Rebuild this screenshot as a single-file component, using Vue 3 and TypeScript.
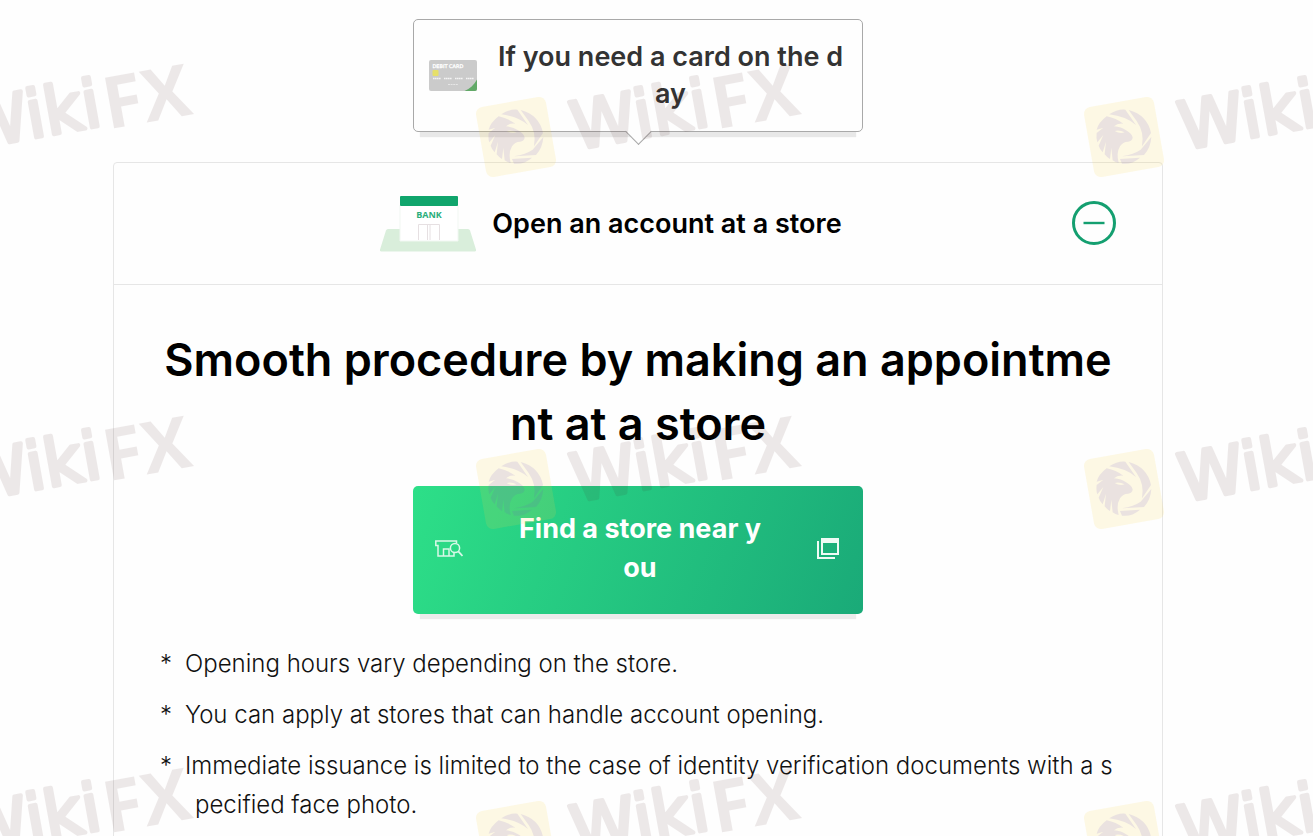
<script setup lang="ts">
import { ref } from 'vue'

const open = ref(true)

const marks: { x: number; y: number }[] = []
for (let row = 0; row < 3; row++) {
  for (let col = -1; col < 2; col++) {
    marks.push({ x: 516 + col * 608, y: 137 + row * 352 })
  }
}

const notes: string[][] = [
  ['Opening hours vary depending on the store.'],
  ['You can apply at stores that can handle account opening.'],
  ['Immediate issuance is limited to the case of identity verification documents with a s', 'pecified face photo.'],
]
</script>

<template>
  <main class="page">
    <div class="bubble">
      <svg class="card-icon" viewBox="0 0 48 31" aria-hidden="true">
        <rect width="48" height="31" rx="2" fill="#cbcbcb" />
        <path d="M48 19.500V29a2 2 0 0 1-2 2H35.500C41 28.500 45 25 48 19.500Z" fill="#62a968" />
        <rect x="3.500" y="10" width="6" height="6" rx="1" fill="#e6e06a" />
        <text x="3.500" y="7.500" class="card-name">DEBIT CARD</text>
        <path d="M4 18.500h8M15 18.500h8M26 18.500h8M37 18.500h8" stroke="#f4f4f4" stroke-width="1.600" stroke-dasharray="1.600 .4" />
        <path d="M19 24.500h10" stroke="#e6e6e6" stroke-width="1" stroke-dasharray="2 .6" />
      </svg>
      <p class="bubble-text">If you need a card on the d<br />ay</p>
    </div>

    <section class="panel">
      <header class="panel-head">
        <svg class="bank-icon" viewBox="0 0 96 56" aria-hidden="true">
          <path d="M8 33h80q1.500 0 2 1.500l6 19q.5 2-1.500 2H1.500q-2 0-1.500-2l6-19Q6.500 33 8 33Z" fill="#d9eedb" />
          <path d="M20 9h58v36H20Z" fill="#fff" stroke="#f1f7f2" stroke-width="1" />
          <rect x="20" y="0" width="58" height="10" rx="1" fill="#10a56c" />
          <path d="M38.500 44V28.500h21V44M47.500 28.500V44M50 28.500V44" fill="none" stroke="#e6e0e2" stroke-width="1" />
          <text x="49" y="22" text-anchor="middle" class="bank-name">BANK</text>
        </svg>
        <h2 class="panel-title">Open an account at a store</h2>
        <button class="toggle" type="button" aria-label="Toggle section" :aria-expanded="open" @click="open = !open">
          <svg viewBox="0 0 44 44" aria-hidden="true">
            <circle cx="22" cy="22" r="20.500" fill="none" stroke="#149f70" stroke-width="3" />
            <path d="M11.500 22h21" stroke="#149f70" stroke-width="2.400" />
            <path v-if="!open" d="M22 11.500v21" stroke="#149f70" stroke-width="2.400" />
          </svg>
        </button>
      </header>

      <div v-if="open" class="panel-body">
        <h1 class="headline">Smooth procedure by making an appointme<br />nt at a store</h1>

        <a class="find" href="#stores">
          <svg class="shop-icon" viewBox="0 0 28 17" fill="none" stroke="#d9f8e8" stroke-width="1.500" aria-hidden="true">
            <path d="M21.500 3V1H.8v4.500h2.200V16H19V13" />
            <path d="M8.500 16V9h5.500v7" />
            <circle cx="20" cy="8" r="4.600" />
            <path d="M23.300 11.300 27.500 16" stroke-width="1.800" />
          </svg>
          <span class="find-text">Find a store near y<br />ou</span>
          <svg class="window-icon" viewBox="0 0 22 21" fill="#effbf5" aria-hidden="true">
            <path d="M4 0h18v17H4ZM6 5v10h14V5Z" fill-rule="evenodd" />
            <path d="M0 3h2v16h16v2H0Z" />
          </svg>
        </a>

        <ul class="notes">
          <li v-for="note in notes" :key="note[0]">
            <span class="star">*</span>
            <span class="note">
              <template v-for="(line, i) in note" :key="line"><br v-if="i > 0" />{{ line }}</template>
            </span>
          </li>
        </ul>
      </div>
    </section>

    <svg class="marks" aria-hidden="true">
      <g v-for="m in marks" :key="`${m.x}-${m.y}`" :transform="`translate(${m.x} ${m.y})`">
        <rect x="-35.500" y="-35.500" width="71" height="71" rx="7" transform="rotate(-10)" class="mark-tile" />
        <g transform="scale(.3333)" class="mark-bird">
          <path d="M-52-62Q-76-44-82-22L-62-28-82-12Q-84 4-80 16L-62-6-76 26Q-72 38-64 46L-54 14-58 52Q-50 62-42 66L-38 32-34 70Q-26 76-16 78Q-24 48-12 28Q-4 14 12 14Q24 12 26 2Q24-10 6-20Q-8-30-30-32Q-20-42-2-40Q-24-56-52-62ZM-28-18Q-14-22 2-14Q-12-8-28-18Z" fill-rule="evenodd" />
          <path d="M-44-68Q-20-84 4-82L36-36Q6-62-44-68Z" />
          <path d="M14-81Q70-66 81-12L54 28Q62-14 38-48Z" />
          <path d="M82 0Q80 32 60 54L-6 58Q30 52 50 38Z" />
          <path d="M-12 66 48 62Q22 84-6 80Z" />
        </g>
        <g transform="rotate(-10.200)" class="mark-word">
          <text x="56" y="23" class="mark-soft">Wiki</text>
          <text x="198" y="28" class="mark-sharp">FX</text>
        </g>
      </g>
    </svg>
  </main>
</template>

<style>
body {
  margin: 0;
  background: #fefefe;
}
html,
body {
  overflow-x: hidden;
}
</style>

<style scoped>
.page {
  position: relative;
  box-sizing: border-box;
  height: 100vh;
  overflow: hidden;
  padding: 19px 150px 0 113px;
  font-family: Inter, 'Noto Sans', sans-serif;
  color: #000;
}

.bubble {
  position: relative;
  box-sizing: border-box;
  display: flex;
  align-items: center;
  gap: 17px;
  max-width: 450px;
  margin: 0 auto 30px;
  padding: 18px 15px 19px;
  border: 1px solid #a9a9a9;
  border-radius: 5px;
  background: #fefefe;
  box-shadow: 0 12px 1px -7px #e8e8e8;
}
.bubble::after {
  content: '';
  position: absolute;
  left: 50%;
  bottom: -10px;
  width: 18px;
  height: 18px;
  margin-left: -9px;
  border: solid #a9a9a9;
  border-width: 0 1px 1px 0;
  background: linear-gradient(135deg, transparent 50%, #fefefe 50%);
  transform: rotate(45deg);
}
.card-icon {
  flex: none;
  width: 48px;
  height: 31px;
}
.card-name {
  font: 400 5px 'DejaVu Sans', sans-serif;
  fill: #fff;
  stroke: #fff;
  stroke-width: 0.3px;
}
.bubble-text {
  flex: 1;
  margin: 0;
  font-size: 27px;
  font-weight: 600;
  line-height: 37px;
  text-align: center;
  white-space: nowrap;
  color: #333;
}

.panel {
  border: 1px solid #e6e6e6;
  border-radius: 4px;
  min-height: 100vh;
}
.panel-head {
  position: relative;
  display: flex;
  align-items: center;
  justify-content: center;
  gap: 16px;
  height: 121px;
  padding-right: 54px;
  border-bottom: 1px solid #e6e6e6;
}
.bank-icon {
  width: 96px;
  height: 56px;
}
.bank-name {
  font: 700 9px 'Open Sans', sans-serif;
  fill: #2bae7b;
}
.panel-title {
  margin: 0;
  font-size: 27px;
  font-weight: 600;
  line-height: 40px;
}
.toggle {
  position: absolute;
  top: 38px;
  right: 46px;
  width: 44px;
  height: 44px;
  padding: 0;
  border: 0;
  background: none;
  cursor: pointer;
}
.toggle svg {
  display: block;
}

.panel-body {
  padding: 43px 40px;
}
.headline {
  margin: 0 0 30px;
  font-size: 45px;
  font-weight: 600;
  line-height: 64px;
  text-align: center;
  white-space: nowrap;
}
.find {
  box-sizing: border-box;
  display: flex;
  align-items: center;
  justify-content: space-between;
  max-width: 450px;
  min-height: 128px;
  margin: 0 auto 30px;
  padding: 23px 24px 27px 22px;
  border-radius: 5px;
  background: linear-gradient(110deg, #2ddf88, #1aaa78);
  box-shadow: 0 12px 1px -7px #ebebeb;
  color: #fff;
  text-decoration: none;
}
.shop-icon {
  width: 28px;
  height: 17px;
}
.window-icon {
  width: 22px;
  height: 21px;
}
.find-text {
  font-size: 27px;
  font-weight: 700;
  line-height: 39px;
  text-align: center;
}

.notes {
  display: grid;
  gap: 12px;
  margin: 0;
  padding: 0 6px;
  list-style: none;
  font-size: 24px;
  line-height: 39px;
  font-weight: 300;
  color: #111;
}
.notes li {
  display: flex;
}
.star {
  flex: none;
  width: 25px;
}
.note {
  padding-left: 10px;
  text-indent: -10px;
  white-space: nowrap;
}

.marks {
  position: absolute;
  inset: 0;
  width: 100%;
  height: 100%;
  pointer-events: none;
}
.mark-tile {
  fill: #fad24a;
  opacity: 0.14;
}
.mark-bird {
  fill: #7054c6;
  opacity: 0.13;
}
.mark-word {
  fill: #4a1e1e;
  stroke: #4a1e1e;
  opacity: 0.095;
}
.mark-soft {
  font: 400 66px 'DejaVu Sans', sans-serif;
  stroke-width: 4px;
  stroke-linejoin: round;
}
.mark-sharp {
  font: 700 72px 'Open Sans', sans-serif;
  stroke-width: 0;
}
</style>
